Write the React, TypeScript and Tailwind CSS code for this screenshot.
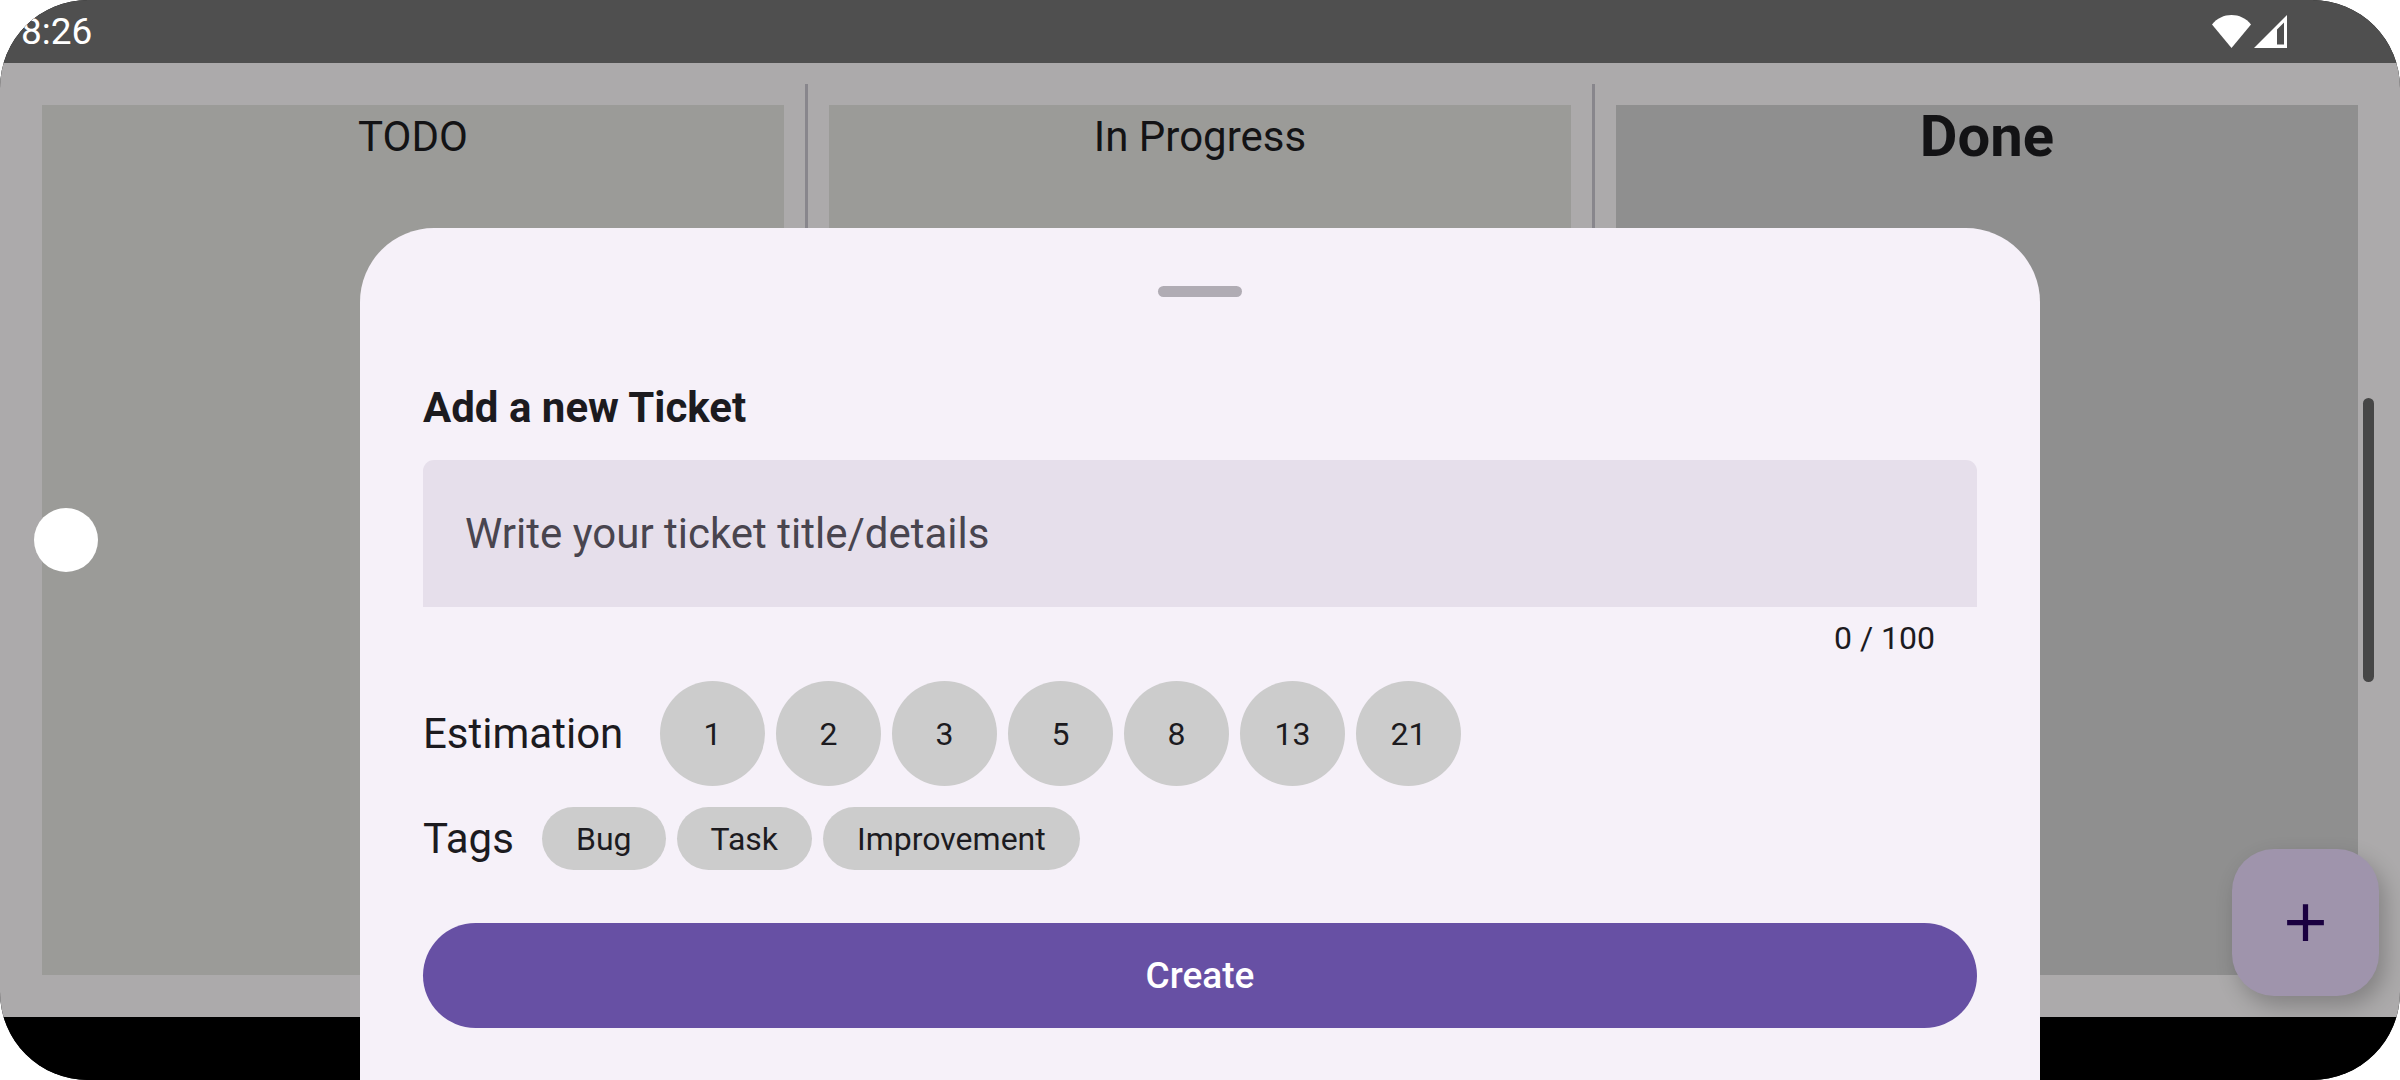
import React, { useState } from "react";

const columns = [
  { title: "TODO", panel: "bg-[#9b9b98]", heading: "text-[42px]" },
  { title: "In Progress", panel: "bg-[#9b9b98]", heading: "text-[42px]" },
  { title: "Done", panel: "bg-[#8f8f8f]", heading: "text-[58px] font-bold" },
];

const estimations = [1, 2, 3, 5, 8, 13, 21];
const tags = ["Bug", "Task", "Improvement"];
const maxLength = 100;

function StatusBar() {
  return (
    <header className="flex h-[63px] items-center justify-between bg-[#4f4f4f] pl-[21px] pr-[113px] text-white">
      <span className="text-[37px] leading-[63px]">8:26</span>
      <div className="flex items-center gap-[3px]">
        <svg width="39" height="33" viewBox="0 0 39 33" fill="currentColor" aria-label="Wi-Fi">
          <path d="M19.5 33 0 9.5C5 3.200 12 0 19.500 0S34 3.200 39 9.500z" />
        </svg>
        <svg width="33" height="33" viewBox="0 0 33 33" fill="currentColor" aria-label="Signal">
          <path fillRule="evenodd" d="M0 33 33 0v33zM23 14.500V29.500h7V7.500z" />
        </svg>
      </div>
    </header>
  );
}

function Board() {
  return (
    <main className="relative flex grow gap-[21px] bg-[#acaaab] px-[42px] py-[21px]">
      {columns.map((column, i) => (
        <React.Fragment key={column.title}>
          {i > 0 && <div className="w-[3px] bg-[#88868c]" />}
          <section className={`my-[21px] flex-1 basis-0 ${column.panel}`}>
            <h2 className={`text-center leading-[63px] text-[#131315] ${column.heading}`}>
              {column.title}
            </h2>
          </section>
        </React.Fragment>
      ))}

      {/* Add ticket button */}
      <button
        type="button"
        aria-label="Add ticket"
        className="absolute bottom-[21px] right-[21px] flex size-[147px] items-center justify-center rounded-[42px] bg-[#9f94ac] text-[#1a0040] shadow-[6px_10px_22px_rgba(0,0,0,0.24)]"
      >
        <svg width="63" height="63" viewBox="0 0 24 24" fill="currentColor">
          <path d="M19 13h-6v6h-2v-6H5v-2h6V5h2v6h6z" />
        </svg>
      </button>
    </main>
  );
}

function TicketSheet() {
  const [title, setTitle] = useState("");
  const [estimation, setEstimation] = useState<number | null>(null);
  const [tag, setTag] = useState<string | null>(null);

  return (
    <form
      onSubmit={(e) => e.preventDefault()}
      className="absolute inset-x-0 bottom-0 mx-auto w-full max-w-[1680px] rounded-t-[74px] bg-[#f6f1f9] px-[63px] pb-[52px] text-[#1c1b1f]"
    >
      <div className="mx-auto mt-[58px] h-[11px] w-[84px] rounded-full bg-[#b0acb4]" />

      <label htmlFor="ticket-title" className="mt-[79px] block text-[42px] font-bold leading-[63px]">
        Add a new Ticket
      </label>
      <input
        id="ticket-title"
        type="text"
        value={title}
        maxLength={maxLength}
        onChange={(e) => setTitle(e.target.value)}
        placeholder="Write your ticket title/details"
        className="mt-[21px] block h-[147px] w-full rounded-t-[11px] bg-[#e6dfeb] px-[42px] text-[42px] outline-none placeholder:text-[#49454f] placeholder:opacity-100"
      />
      <p className="mt-[10px] pr-[42px] text-right text-[32px] leading-[42px]">
        {title.length} / {maxLength}
      </p>

      {/* Estimation */}
      <div role="group" aria-labelledby="estimation-label" className="mt-[22px] flex items-center gap-[11px]">
        <span id="estimation-label" className="w-[226px] text-[42px] leading-[63px]">
          Estimation
        </span>
        {estimations.map((value) => (
          <button
            key={value}
            type="button"
            aria-pressed={estimation === value}
            onClick={() => setEstimation(value)}
            className="size-[105px] rounded-full bg-[#cccccc] text-[32px] leading-[42px] aria-pressed:bg-[#b3a6d6]"
          >
            {value}
          </button>
        ))}
      </div>

      {/* Tags */}
      <div role="group" aria-labelledby="tags-label" className="mt-[21px] flex items-center gap-[11px]">
        <span id="tags-label" className="w-[108px] text-[42px] leading-[63px]">
          Tags
        </span>
        {tags.map((name) => (
          <button
            key={name}
            type="button"
            aria-pressed={tag === name}
            onClick={() => setTag(name)}
            className="h-[63px] rounded-full bg-[#cccccc] px-[34px] text-[32px] leading-[42px] aria-pressed:bg-[#b3a6d6]"
          >
            {name}
          </button>
        ))}
      </div>

      <button
        type="submit"
        className="mt-[53px] h-[105px] w-full rounded-full bg-[#6750a4] text-[37px] font-medium text-white"
      >
        Create
      </button>
    </form>
  );
}

export default function App() {
  return (
    <div className="min-h-screen bg-white font-['Roboto',sans-serif]">
      <div className="relative flex min-h-screen flex-col overflow-hidden rounded-[88px] bg-black">
        <StatusBar />
        <Board />
        <div className="h-[63px] bg-black" />

        {/* Camera cutout and scroll indicator */}
        <div className="absolute left-[34px] top-1/2 size-[64px] -translate-y-1/2 rounded-full bg-white" />
        <div className="absolute right-[26px] top-1/2 h-[284px] w-[11px] -translate-y-1/2 rounded-full bg-[#464646]" />

        <TicketSheet />
      </div>
    </div>
  );
}
